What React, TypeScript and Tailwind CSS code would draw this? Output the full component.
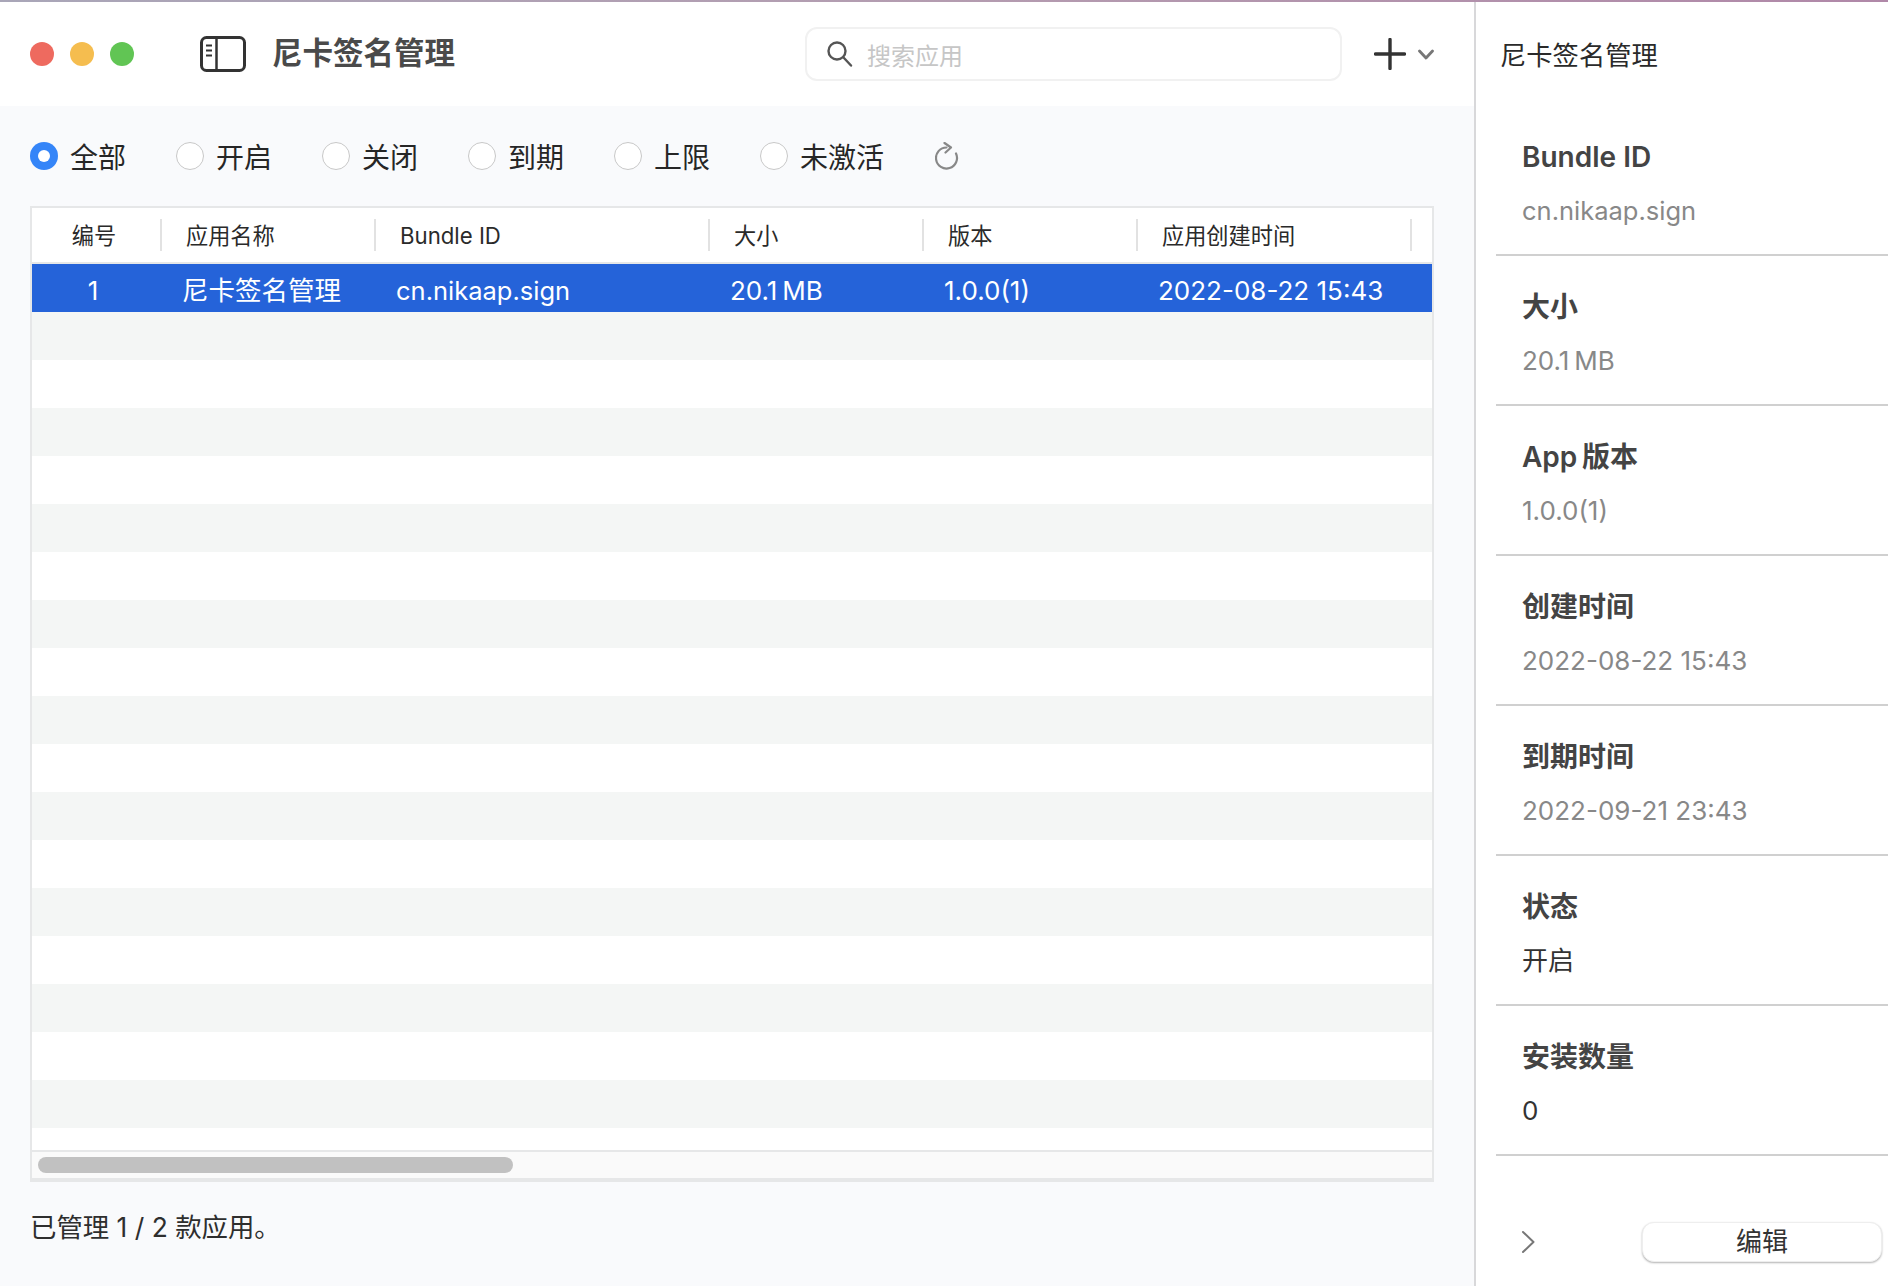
import React from "react";

const font = { fontFamily: '"Inter", "Noto Sans CJK SC", sans-serif' };

const filters = ["全部", "开启", "关闭", "到期", "上限", "未激活"];
const columns = [
  { label: "编号", cls: "justify-center pr-1" },
  { label: "应用名称", cls: "pl-[24px]" },
  { label: "Bundle ID", cls: "pl-[24px]" },
  { label: "大小", cls: "pl-[24px]" },
  { label: "版本", cls: "pl-[24px]" },
  { label: "应用创建时间", cls: "pl-[24px]" },
];
const rowCells = [
  { text: "1", cls: "justify-center pr-2 text-[26px]" },
  { text: "尼卡签名管理", cls: "pl-[20px] text-[26.5px]" },
  { text: "cn.nikaap.sign", cls: "pl-[20px] text-[25.5px]" },
  { text: "20.1\u2009MB", cls: "pl-[20px] text-[26px]" },
  { text: "1.0.0(1)", cls: "pl-[20px] text-[26px]" },
  { text: "2022-08-22 15:43", cls: "pl-[20px] text-[26px]" },
];
const details = [
  { label: "Bundle ID", value: "cn.nikaap.sign", cls: "text-[#888] text-[25.5px]" },
  { label: "大小", value: "20.1\u2009MB", cls: "text-[#888] text-[26px]" },
  { label: "App\u2009版本", value: "1.0.0(1)", cls: "text-[#888] text-[26px]" },
  { label: "创建时间", value: "2022-08-22 15:43", cls: "text-[#888] text-[26px]" },
  { label: "到期时间", value: "2022-09-21 23:43", cls: "text-[#888] text-[26px]" },
  { label: "状态", value: "开启", cls: "text-[#333] text-[26px]" },
  { label: "安装数量", value: "0", cls: "text-[#333] text-[26px]" },
];
const stripes = Array.from({ length: 18 }, (_, i) => i);

export default function App() {
  return (
    <div style={font} className="w-[1888px] h-[1286px] overflow-hidden flex flex-col bg-white">
      <div className="h-[2px] shrink-0 bg-gradient-to-r from-[#a9a6b8] via-[#b49cb0] to-[#b088a8]" />
      <div className="flex-1 flex min-h-0">
        {/* main pane */}
        <div className="w-[1476px] shrink-0 border-r-2 border-[#d8d8da] flex flex-col">
          <header className="h-[104px] shrink-0 flex items-center bg-white">
            <div className="flex items-center gap-[16px] ml-[30px]">
              <span className="w-[24px] h-[24px] rounded-full bg-[#ee6a5f]" />
              <span className="w-[24px] h-[24px] rounded-full bg-[#f5bd4f]" />
              <span className="w-[24px] h-[24px] rounded-full bg-[#61c554]" />
            </div>
            <svg width="46" height="36" viewBox="0 0 46 36" fill="none" stroke="#333" className="ml-[66px] shrink-0">
              <rect x="1.5" y="1.5" width="43" height="33" rx="5" strokeWidth="3" />
              <path d="M16.5 2V34" strokeWidth="2.5" />
              <path d="M6 9.5H12M6 14.5H12M6 19.5H12" strokeWidth="2" />
            </svg>
            <h1 className="ml-[26px] text-[30.5px] leading-none font-semibold text-[#4a4a4a] w-[533px] shrink-0 -mt-[2px]">尼卡签名管理</h1>
            <div className="w-[537px] h-[54px] shrink-0 rounded-[12px] border-2 border-[#f1f1f1] flex items-center pl-[20px]">
              <svg width="26" height="26" viewBox="0 0 26 26" fill="none" stroke="#555" strokeWidth="2.4" strokeLinecap="round" className="shrink-0">
                <circle cx="10" cy="10" r="8.5" />
                <path d="M16.5 16.5L24 24.5" />
              </svg>
              <span className="ml-[14px] text-[24px] leading-none text-[#c6c6c6] mt-[6px]">搜索应用</span>
            </div>
            <svg width="32" height="32" viewBox="0 0 32 32" fill="none" stroke="#333" strokeWidth="3.4" strokeLinecap="round" className="ml-[32px] shrink-0">
              <path d="M16 1.5V30.5M1.5 16H30.5" />
            </svg>
            <svg width="16" height="11" viewBox="0 0 16 11" fill="none" stroke="#777" strokeWidth="2.8" strokeLinecap="round" strokeLinejoin="round" className="ml-[12px] shrink-0">
              <path d="M1.5 2L8 9L14.5 2" />
            </svg>
          </header>

          <div className="flex-1 min-h-0 bg-[#f9fafc] flex flex-col pl-[30px] pr-[40px]">
            <div className="flex items-center gap-[50px] mt-[36px] h-[28px] shrink-0">
              {filters.map((f, i) => (
                <label key={f} className="flex items-center gap-[12px]">
                  {i === 0 ? (
                    <span className="w-[28px] h-[28px] rounded-full bg-[#3585f8] flex items-center justify-center">
                      <span className="w-[12px] h-[12px] rounded-full bg-white" />
                    </span>
                  ) : (
                    <span className="w-[28px] h-[28px] rounded-full bg-white border border-[#c8c8c8]" />
                  )}
                  <span className="text-[28px] leading-none text-[#262626] mt-[4px]">{f}</span>
                </label>
              ))}
              <svg width="24" height="28" viewBox="0 0 24 28" fill="none" stroke="#888" strokeWidth="2.2" strokeLinecap="round" strokeLinejoin="round" className="shrink-0 ml-[1px]">
                <path d="M11.5 5.5A10.5 10.5 0 1 0 21 11.5" />
                <path d="M9.5 1L16 5.5L10.5 10.5" />
              </svg>
            </div>

            <div className="mt-[36px] h-[976px] shrink-0 border-2 border-b-4 border-[#e6e7e8] bg-white flex flex-col">
              <div className="h-[56px] shrink-0 grid grid-cols-[130px_214px_334px_214px_214px_274px] items-center border-b-2 border-[#e6e7e8]">
                {columns.map((c) => (
                  <div key={c.label} className={`h-[32px] border-r-2 border-[#e2e2e2] flex items-center text-[22.2px] leading-none text-[#2a2a2a] pt-[2px] ${c.cls}`}>
                    {c.label}
                  </div>
                ))}
              </div>
              <div className="flex-1 min-h-0 overflow-hidden">
                <div className="h-[48px] grid grid-cols-[130px_214px_334px_214px_214px_274px] items-center bg-[#2563d9]">
                  {rowCells.map((c) => (
                    <div key={c.text} className={`flex items-center leading-none text-white whitespace-nowrap pt-[5px] ${c.cls}`}>
                      {c.text}
                    </div>
                  ))}
                </div>
                {stripes.map((i) => (
                  <div key={i} className={i % 2 === 0 ? "h-[48px] bg-[#f4f6f5]" : "h-[48px] bg-white"} />
                ))}
              </div>
              <div className="h-[28px] shrink-0 border-t-2 border-[#e6e7e8] bg-[#fafafa] flex items-center pl-[6px]">
                <div className="w-[475px] h-[16px] rounded-full bg-[#c1c1c1]" />
              </div>
            </div>

            <p className="mt-[29px] text-[26.4px] leading-[32px] text-[#2e2e2e]">已管理 1 / 2 款应用。</p>
          </div>
        </div>

        {/* detail pane */}
        <aside className="flex-1 min-w-0 bg-white flex flex-col pl-[20px]">
          <h2 className="mt-[39px] h-[30px] text-[26.3px] leading-[30px] text-[#2a2a2a] shrink-0 pl-[4px]">尼卡签名管理</h2>
          <div className="mt-[35px] shrink-0">
            {details.map((d) => (
              <div key={d.label} className="h-[150px] border-b-2 border-[#d0d0d0] pl-[26px] pt-[33px]">
                <div className="h-[36px] flex items-center text-[28px] leading-none font-semibold text-[#444]">{d.label}</div>
                <div className={`h-[36px] mt-[18px] flex items-center leading-none ${d.cls}`}>{d.value}</div>
              </div>
            ))}
          </div>
          <div className="mt-[66px] flex items-center pl-[25px]">
            <svg width="14" height="24" viewBox="0 0 14 24" fill="none" stroke="#777" strokeWidth="2" strokeLinecap="round" strokeLinejoin="round" className="shrink-0">
              <path d="M2 2L12.5 12L2 22" />
            </svg>
            <button className="ml-[107px] w-[240px] h-[40px] rounded-[12px] bg-white border border-[#eeeeee] shadow-[0_1px_2px_rgba(0,0,0,0.3)] text-[26px] leading-none text-[#333] flex items-center justify-center">
              编辑
            </button>
          </div>
        </aside>
      </div>
    </div>
  );
}
